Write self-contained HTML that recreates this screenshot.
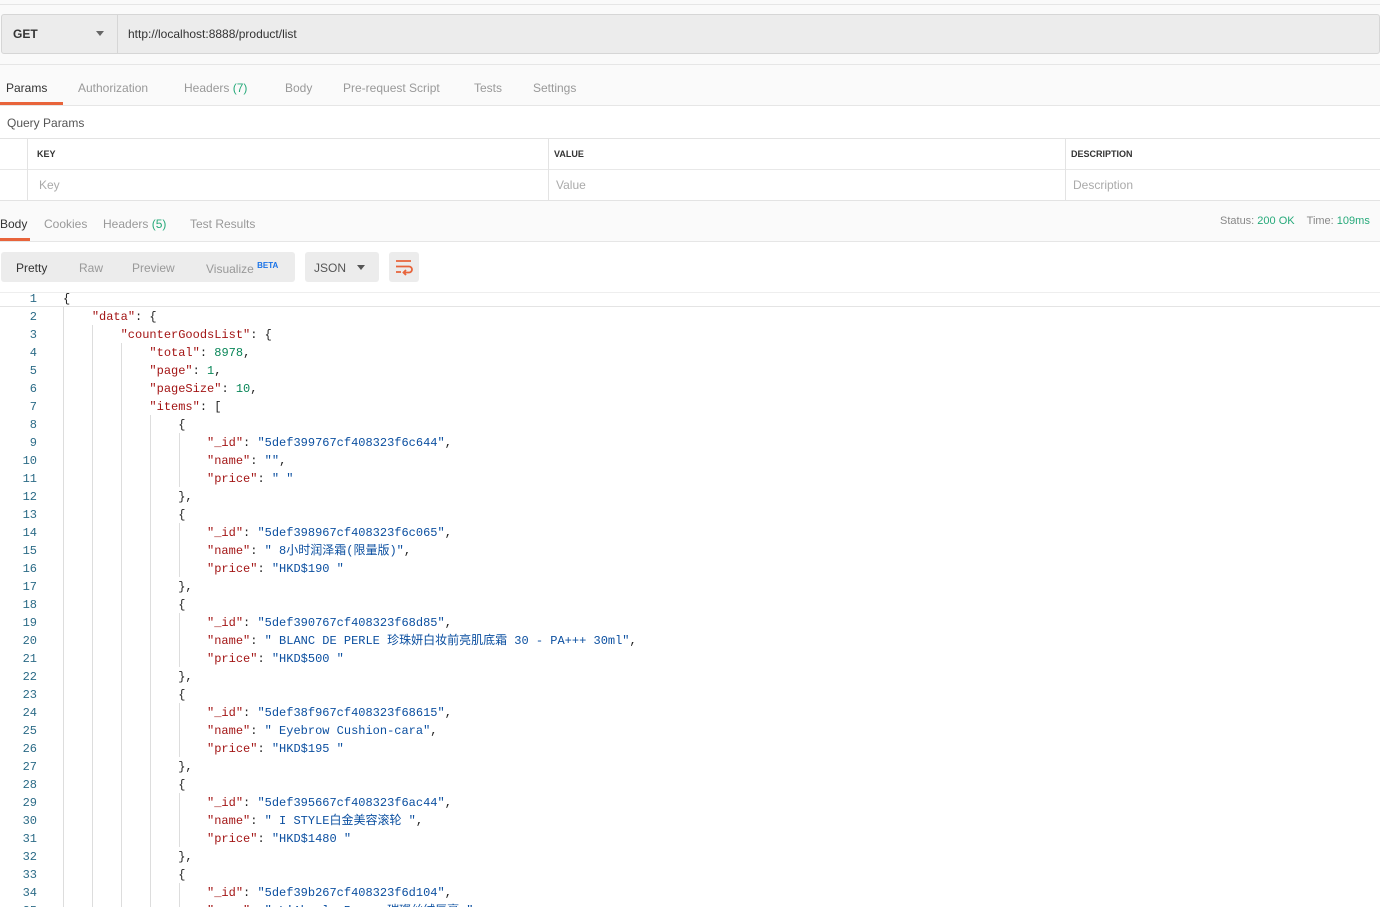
<!DOCTYPE html>
<html><head><meta charset="utf-8"><style>
*{margin:0;padding:0;box-sizing:border-box}
html{width:1380px;height:907px;overflow:hidden}
body{width:1380px;height:907px;overflow:hidden;background:#fff;font-family:"Liberation Sans","Noto Sans CJK SC",sans-serif;position:relative}
.a{position:absolute}
.tab{position:absolute;font-size:12px;color:#999}
.code{position:absolute;left:0;top:290px;width:1380px;font-family:"Liberation Mono","Noto Sans CJK SC",monospace;font-size:12px;line-height:18px;white-space:pre}
.ln{position:absolute;left:0;width:37px;text-align:right;color:#2b6b87}
.tx{position:absolute;left:63px;color:#222}
.k{color:#a31515}.s{color:#0b4fa0}.n{color:#098658}
.g{position:absolute;width:1px;background:#ddd}
</style></head><body>
<div class="a" style="left:0;top:0;width:1380px;height:64px;background:#fafafa"></div>
<div class="a" style="left:0;top:4px;width:1380px;height:1px;background:#e6e6e6"></div>
<div class="a" style="left:1px;top:14px;width:1379px;height:40px;background:#ececec;border:1px solid #d6d6d6;border-radius:3px"></div>
<div class="a" style="left:117px;top:15px;width:1px;height:38px;background:#d6d6d6"></div>
<div class="a" style="left:13px;top:27px;font-size:12px;font-weight:bold;color:#333">GET</div>
<div class="a" style="left:96px;top:31px;border-left:4px solid transparent;border-right:4px solid transparent;border-top:5px solid #666"></div>
<div class="a" style="left:128px;top:27px;font-size:12px;color:#333">http://localhost:8888/product/list</div>
<div class="a" style="left:0;top:64px;width:1380px;height:1px;background:#e6e6e6"></div>
<div class="a" style="left:0;top:65px;width:1380px;height:41px;background:#fafafa;border-bottom:1px solid #e6e6e6"></div>
<div class="tab" style="left:6px;top:81px;color:#333">Params</div>
<div class="a" style="left:0;top:102px;width:63px;height:3px;background:#e8643b"></div>
<div class="tab" style="left:78px;top:81px">Authorization</div>
<div class="tab" style="left:184px;top:81px">Headers <span style="color:#26a97a">(7)</span></div>
<div class="tab" style="left:285px;top:81px">Body</div>
<div class="tab" style="left:343px;top:81px">Pre-request Script</div>
<div class="tab" style="left:474px;top:81px">Tests</div>
<div class="tab" style="left:533px;top:81px">Settings</div>
<div class="tab" style="left:7px;top:116px;color:#555">Query Params</div>
<div class="a" style="left:0;top:138px;width:1380px;height:63px;border-top:1px solid #e3e3e3;border-bottom:1px solid #e3e3e3"></div>
<div class="a" style="left:0;top:169px;width:1380px;height:1px;background:#e8e8e8"></div>
<div class="a" style="left:27px;top:139px;width:1px;height:61px;background:#e3e3e3"></div>
<div class="a" style="left:548px;top:139px;width:1px;height:61px;background:#e3e3e3"></div>
<div class="a" style="left:1065px;top:139px;width:1px;height:61px;background:#e3e3e3"></div>
<div class="a" style="left:37px;top:149px;font-size:9px;font-weight:bold;color:#333">KEY</div>
<div class="a" style="left:554px;top:149px;font-size:9px;font-weight:bold;color:#333">VALUE</div>
<div class="a" style="left:1071px;top:149px;font-size:9px;font-weight:bold;color:#333">DESCRIPTION</div>
<div class="tab" style="left:39px;top:178px;color:#aaa">Key</div>
<div class="tab" style="left:556px;top:178px;color:#aaa">Value</div>
<div class="tab" style="left:1073px;top:178px;color:#aaa">Description</div>
<div class="a" style="left:0;top:201px;width:1380px;height:41px;background:#fafafa;border-bottom:1px solid #e6e6e6"></div>
<div class="tab" style="left:0;top:217px;color:#333">Body</div>
<div class="a" style="left:0;top:238px;width:30px;height:3px;background:#e8643b"></div>
<div class="tab" style="left:44px;top:217px">Cookies</div>
<div class="tab" style="left:103px;top:217px">Headers <span style="color:#26a97a">(5)</span></div>
<div class="tab" style="left:190px;top:217px">Test Results</div>
<div class="a" style="left:1220px;top:215px;font-size:11px;color:#888;white-space:nowrap">Status: <span style="color:#26a97a">200 OK</span>&nbsp;&nbsp;&nbsp; Time: <span style="color:#26a97a">109ms</span></div>
<div class="a" style="left:0;top:242px;width:1380px;height:50px;background:#fff"></div>
<div class="a" style="left:1px;top:252px;width:294px;height:30px;background:#ececec;border-radius:3px"></div>
<div class="tab" style="left:16px;top:261px;color:#333">Pretty</div>
<div class="tab" style="left:79px;top:261px">Raw</div>
<div class="tab" style="left:132px;top:261px">Preview</div>
<div class="tab" style="left:206px;top:261px">Visualize <sup style="color:#1a73e8;font-size:8px;font-weight:bold">BETA</sup></div>
<div class="a" style="left:305px;top:252px;width:74px;height:30px;background:#ececec;border-radius:3px"></div>
<div class="tab" style="left:314px;top:261px;color:#555">JSON</div>
<div class="a" style="left:357px;top:265px;border-left:4px solid transparent;border-right:4px solid transparent;border-top:5px solid #555"></div>
<div class="a" style="left:389px;top:252px;width:30px;height:30px;background:#ececec;border-radius:3px"></div>
<svg class="a" style="left:394px;top:257px" width="20" height="20" viewBox="0 0 20 20" fill="none" stroke="#e8643b" stroke-width="1.8"><path d="M2 4H17M2 9.5H15a3 3 0 0 1 0 6H10M2 15H7"/><path d="M12 13l-2.5 2.5L12 18"/></svg>
<div class="a" style="left:0;top:292px;width:1380px;height:1px;background:#eee"></div>
<div class="a" style="left:0;top:306px;width:1380px;height:1px;background:#e4e4e4"></div>
<div class="g" style="left:63px;top:307px;height:600px"></div>
<div class="g" style="left:92px;top:325px;height:582px"></div>
<div class="g" style="left:121px;top:343px;height:564px"></div>
<div class="g" style="left:150px;top:415px;height:492px"></div>
<div class="g" style="left:179px;top:433px;height:54px"></div>
<div class="g" style="left:179px;top:523px;height:54px"></div>
<div class="g" style="left:179px;top:613px;height:54px"></div>
<div class="g" style="left:179px;top:703px;height:54px"></div>
<div class="g" style="left:179px;top:793px;height:54px"></div>
<div class="g" style="left:179px;top:883px;height:24px"></div>
<div class="code">
<div class="ln" style="top:0">1</div><div class="tx" style="top:0">{</div>
<div class="ln" style="top:18px">2</div><div class="tx" style="top:18px">    <span class="k">"data"</span>: {</div>
<div class="ln" style="top:36px">3</div><div class="tx" style="top:36px">        <span class="k">"counterGoodsList"</span>: {</div>
<div class="ln" style="top:54px">4</div><div class="tx" style="top:54px">            <span class="k">"total"</span>: <span class="n">8978</span>,</div>
<div class="ln" style="top:72px">5</div><div class="tx" style="top:72px">            <span class="k">"page"</span>: <span class="n">1</span>,</div>
<div class="ln" style="top:90px">6</div><div class="tx" style="top:90px">            <span class="k">"pageSize"</span>: <span class="n">10</span>,</div>
<div class="ln" style="top:108px">7</div><div class="tx" style="top:108px">            <span class="k">"items"</span>: [</div>
<div class="ln" style="top:126px">8</div><div class="tx" style="top:126px">                {</div>
<div class="ln" style="top:144px">9</div><div class="tx" style="top:144px">                    <span class="k">"_id"</span>: <span class="s">"5def399767cf408323f6c644"</span>,</div>
<div class="ln" style="top:162px">10</div><div class="tx" style="top:162px">                    <span class="k">"name"</span>: <span class="s">""</span>,</div>
<div class="ln" style="top:180px">11</div><div class="tx" style="top:180px">                    <span class="k">"price"</span>: <span class="s">" "</span></div>
<div class="ln" style="top:198px">12</div><div class="tx" style="top:198px">                },</div>
<div class="ln" style="top:216px">13</div><div class="tx" style="top:216px">                {</div>
<div class="ln" style="top:234px">14</div><div class="tx" style="top:234px">                    <span class="k">"_id"</span>: <span class="s">"5def398967cf408323f6c065"</span>,</div>
<div class="ln" style="top:252px">15</div><div class="tx" style="top:252px">                    <span class="k">"name"</span>: <span class="s">" 8小时润泽霜(限量版)"</span>,</div>
<div class="ln" style="top:270px">16</div><div class="tx" style="top:270px">                    <span class="k">"price"</span>: <span class="s">"HKD$190 "</span></div>
<div class="ln" style="top:288px">17</div><div class="tx" style="top:288px">                },</div>
<div class="ln" style="top:306px">18</div><div class="tx" style="top:306px">                {</div>
<div class="ln" style="top:324px">19</div><div class="tx" style="top:324px">                    <span class="k">"_id"</span>: <span class="s">"5def390767cf408323f68d85"</span>,</div>
<div class="ln" style="top:342px">20</div><div class="tx" style="top:342px">                    <span class="k">"name"</span>: <span class="s">" BLANC DE PERLE 珍珠妍白妆前亮肌底霜 30 - PA+++ 30ml"</span>,</div>
<div class="ln" style="top:360px">21</div><div class="tx" style="top:360px">                    <span class="k">"price"</span>: <span class="s">"HKD$500 "</span></div>
<div class="ln" style="top:378px">22</div><div class="tx" style="top:378px">                },</div>
<div class="ln" style="top:396px">23</div><div class="tx" style="top:396px">                {</div>
<div class="ln" style="top:414px">24</div><div class="tx" style="top:414px">                    <span class="k">"_id"</span>: <span class="s">"5def38f967cf408323f68615"</span>,</div>
<div class="ln" style="top:432px">25</div><div class="tx" style="top:432px">                    <span class="k">"name"</span>: <span class="s">" Eyebrow Cushion-cara"</span>,</div>
<div class="ln" style="top:450px">26</div><div class="tx" style="top:450px">                    <span class="k">"price"</span>: <span class="s">"HKD$195 "</span></div>
<div class="ln" style="top:468px">27</div><div class="tx" style="top:468px">                },</div>
<div class="ln" style="top:486px">28</div><div class="tx" style="top:486px">                {</div>
<div class="ln" style="top:504px">29</div><div class="tx" style="top:504px">                    <span class="k">"_id"</span>: <span class="s">"5def395667cf408323f6ac44"</span>,</div>
<div class="ln" style="top:522px">30</div><div class="tx" style="top:522px">                    <span class="k">"name"</span>: <span class="s">" I STYLE白金美容滚轮 "</span>,</div>
<div class="ln" style="top:540px">31</div><div class="tx" style="top:540px">                    <span class="k">"price"</span>: <span class="s">"HKD$1480 "</span></div>
<div class="ln" style="top:558px">32</div><div class="tx" style="top:558px">                },</div>
<div class="ln" style="top:576px">33</div><div class="tx" style="top:576px">                {</div>
<div class="ln" style="top:594px">34</div><div class="tx" style="top:594px">                    <span class="k">"_id"</span>: <span class="s">"5def39b267cf408323f6d104"</span>,</div>
<div class="ln" style="top:612px">35</div><div class="tx" style="top:612px">                    <span class="k">"name"</span>: <span class="s">" L'Absolu Rouge 璀璨丝绒唇膏 "</span>,</div>
</div>
</body></html>
